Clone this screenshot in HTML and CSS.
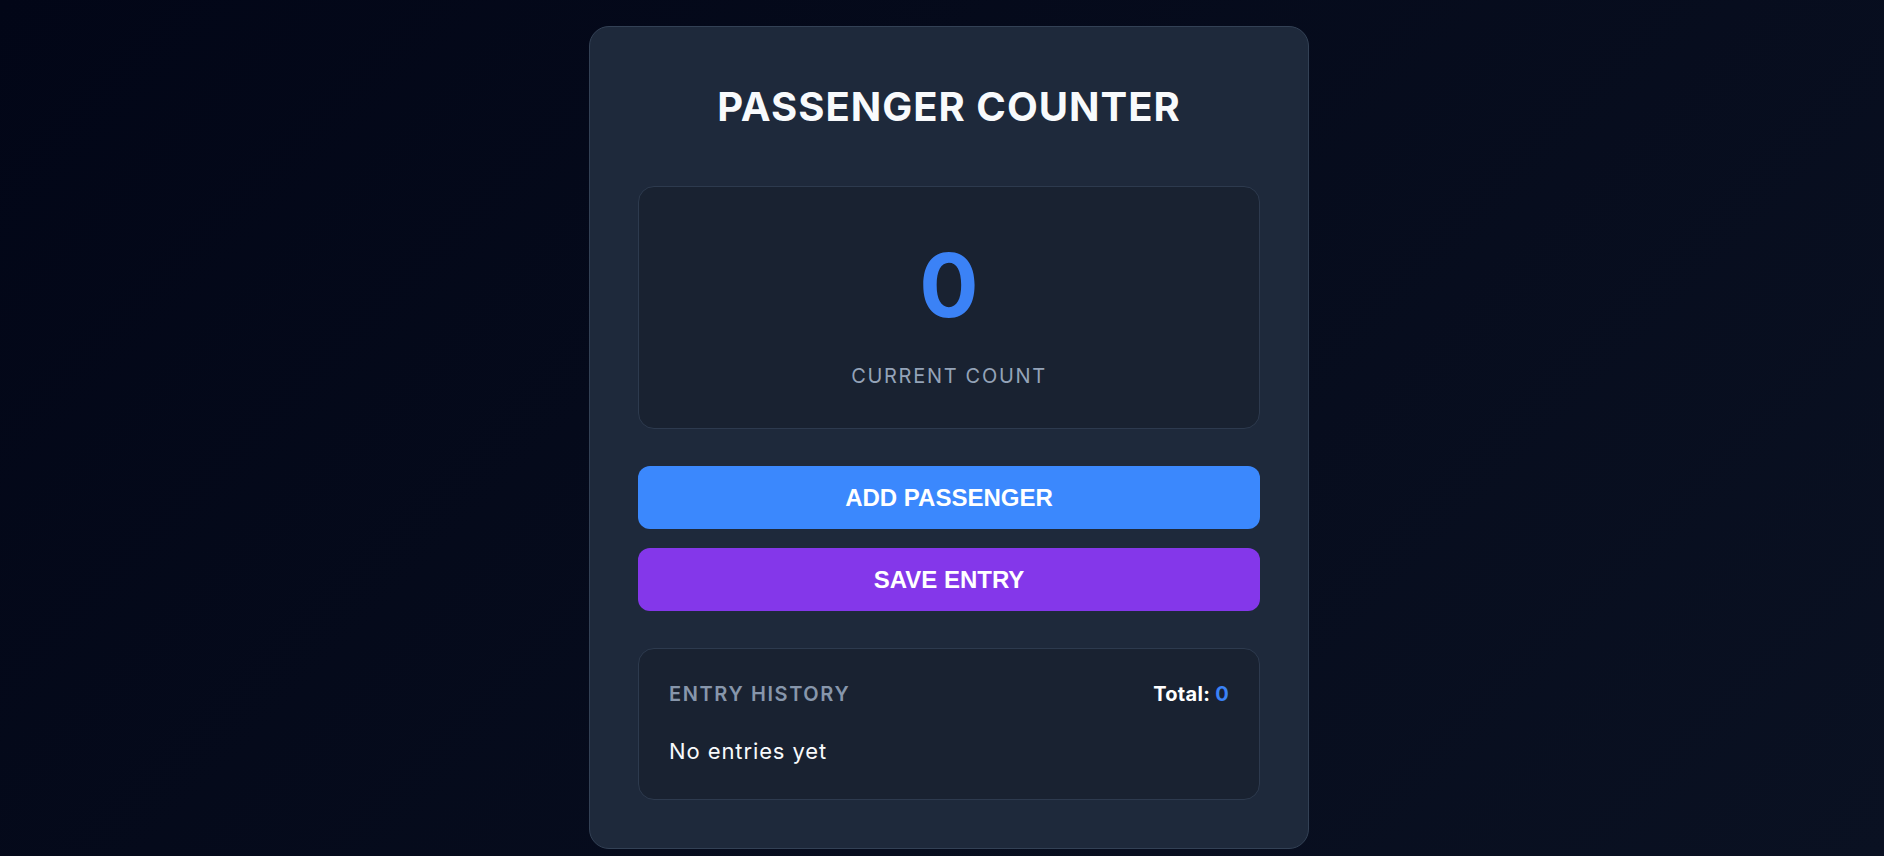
FILE: index.html
```html
<!DOCTYPE html>
<html lang="en">
<head>
<meta charset="utf-8">
<title>Passenger Counter</title>
<link rel="stylesheet" href="styles.css">
</head>
<body>
<main class="card">
  <h1 class="title">PASSENGER COUNTER</h1>
  <section class="counter">
    <div class="count">0</div>
    <div class="count-label">CURRENT COUNT</div>
  </section>
  <div class="actions">
    <button class="btn btn-add">ADD PASSENGER</button>
    <button class="btn btn-save">SAVE ENTRY</button>
  </div>
  <section class="history">
    <div class="history-head">
      <span class="history-title">ENTRY HISTORY</span>
      <span class="history-total">Total: <span class="total-num">0</span></span>
    </div>
    <div class="history-empty">No entries yet</div>
  </section>
</main>
</body>
</html>
```

FILE: styles.css
```css
* { box-sizing: border-box; }

html, body { height: 100%; }

body {
  margin: 0;
  font-family: Inter, "Noto Sans", sans-serif;
  background: linear-gradient(135deg, #020617 0%, #0a1122 100%);
  color: #f8fafc;
  display: flex;
  justify-content: center;
  align-items: flex-start;
  padding: 26px 0 0 14px;
}

.card {
  width: 720px;
  background: #1e293b;
  border: 1px solid #334155;
  border-radius: 20px;
  padding: 48px;
}

.title {
  margin: 8px 0 55px;
  text-align: center;
  font-size: 40px;
  font-weight: 700;
  line-height: 48px;
  letter-spacing: 1px;
  color: #f8fafc;
}

.counter {
  height: 243px;
  background: #192231;
  border: 1px solid #2d3a4e;
  border-radius: 16px;
  display: flex;
  flex-direction: column;
  align-items: center;
  padding-top: 45px;
}

.count {
  font-size: 88px;
  font-weight: 700;
  line-height: 106px;
  color: #3b82f6;
}

.count-label {
  margin-top: 26px;
  font-size: 20px;
  letter-spacing: 1.7px;
  color: #94a3b8;
  line-height: 24px;
}

.actions {
  display: flex;
  flex-direction: column;
  gap: 19px;
  margin: 37px 0 37px;
}

.btn {
  height: 63px;
  border: none;
  border-radius: 12px;
  font-family: "Liberation Sans", Arial, sans-serif;
  font-weight: 700;
  font-size: 24px;
  color: #ffffff;
}

.btn-add { background: #3b88fd; }
.btn-save { background: #8437ea; }

.history {
  height: 152px;
  background: #192231;
  border: 1px solid #2d3a4e;
  border-radius: 16px;
  padding: 33px 30px 0 30px;
}

.history-head {
  display: flex;
  justify-content: space-between;
  align-items: center;
  line-height: 24px;
}

.history-title {
  font-size: 20px;
  font-weight: 600;
  letter-spacing: 1.6px;
  color: #8796ab;
}

.history-total {
  font-size: 20px;
  font-weight: 700;
  letter-spacing: 0.3px;
  color: #ffffff;
}

.total-num { color: #3b82f6; }

.history-empty {
  margin-top: 30px;
  font-size: 22px;
  line-height: 30px;
  letter-spacing: 0.9px;
  color: #f8fafc;
}
```
